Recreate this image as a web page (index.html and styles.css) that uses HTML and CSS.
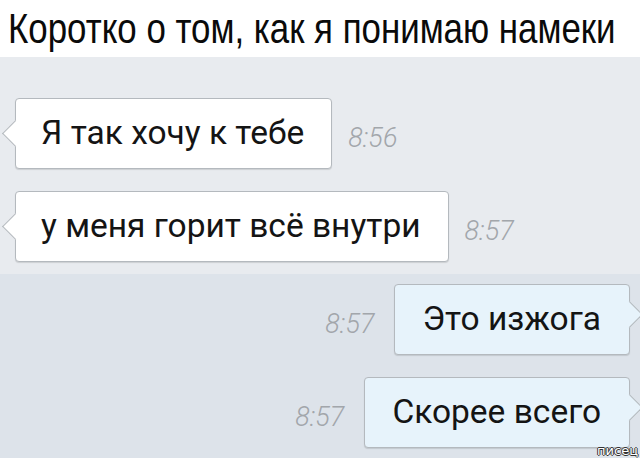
FILE: index.html
```html
<!DOCTYPE html>
<html lang="ru">
<head>
<meta charset="utf-8">
<link rel="stylesheet" href="styles.css">
</head>
<body>
<div class="page">
  <header class="header"><h1 class="title">Коротко о том, как я понимаю намеки</h1></header>
  <section class="chat chat-in">
    <div class="row row-in">
      <div class="bubble bubble-in">Я так хочу к тебе</div>
      <span class="time">8:56</span>
    </div>
    <div class="row row-in">
      <div class="bubble bubble-in">у меня горит всё внутри</div>
      <span class="time">8:57</span>
    </div>
  </section>
  <section class="chat chat-out">
    <div class="row row-out">
      <span class="time">8:57</span>
      <div class="bubble bubble-out">Это изжога</div>
    </div>
    <div class="row row-out">
      <span class="time">8:57</span>
      <div class="bubble bubble-out">Скорее всего</div>
    </div>
  </section>
  <span class="watermark">писец</span>
</div>
</body>
</html>
```
FILE: styles.css
```css
* { box-sizing: border-box; }
html, body { margin: 0; padding: 0; }
body { width: 640px; height: 458px; overflow: hidden; background: #dde3ea; }
.page { position: relative; width: 640px; height: 458px; display: flex; flex-direction: column; overflow: hidden; }
.header { height: 57px; background: #ffffff; padding: 0 0 0 8px; overflow: hidden; }
.title {
  margin: 0;
  font-family: "Liberation Sans", Arial, sans-serif;
  font-weight: normal;
  font-size: 42px;
  line-height: 57px;
  color: #0a0a0a;
  white-space: nowrap;
  display: inline-block;
  transform: scaleX(0.83);
  transform-origin: left center;
}
.chat { display: flex; flex-direction: column; gap: 22px; }
.chat-in { background: #e8ebef; height: 217px; padding-top: 41px; }
.chat-out { background: #dde3ea; flex: 1; padding-top: 10px; }
.row { display: flex; align-items: center; height: 71px; }
.row-in { padding-left: 15px; }
.row-out { justify-content: flex-end; padding-right: 10px; }
.bubble {
  position: relative;
  height: 71px;
  display: flex;
  align-items: center;
  padding: 0 27px 3px 25px;
  font-family: Roboto, "Noto Sans", sans-serif;
  font-size: 33.5px;
  color: #141414;
  border: 1px solid #b4b9be;
  border-radius: 4px;
  box-shadow: 0 1px 1px rgba(0,0,0,0.12);
  white-space: nowrap;
}
.bubble-in { background: #ffffff; }
.bubble-out { background: #e7f3fb; padding-left: 27px; padding-right: 28px; }
.bubble::before {
  content: "";
  position: absolute;
  top: 25px;
  width: 18px;
  height: 18px;
  transform: rotate(45deg);
}
.bubble-in::before {
  left: -10px;
  background: #ffffff;
  border-left: 1px solid #b4b9be;
  border-bottom: 1px solid #b4b9be;
}
.bubble-out::before {
  right: -10px;
  top: 20px;
  background: #e7f3fb;
  border-right: 1px solid #b4b9be;
  border-top: 1px solid #b4b9be;
}
.time {
  font-family: Roboto, "Noto Sans", sans-serif;
  font-weight: 300;
  font-style: italic;
  font-size: 27px;
  color: #a2a6ab;
  padding-top: 8px;
}
.row-in .time { margin-left: 16px; }
.row-out .time { margin-right: 20px; }
.watermark {
  position: absolute;
  right: 2px;
  bottom: 0;
  line-height: 14px;
  font-family: "DejaVu Sans", sans-serif;
  font-size: 13px;
  color: #ffffff;
  text-shadow: 1px 0 0 #333, -1px 0 0 #333, 0 1px 0 #333, 0 -1px 0 #333;
}
```
